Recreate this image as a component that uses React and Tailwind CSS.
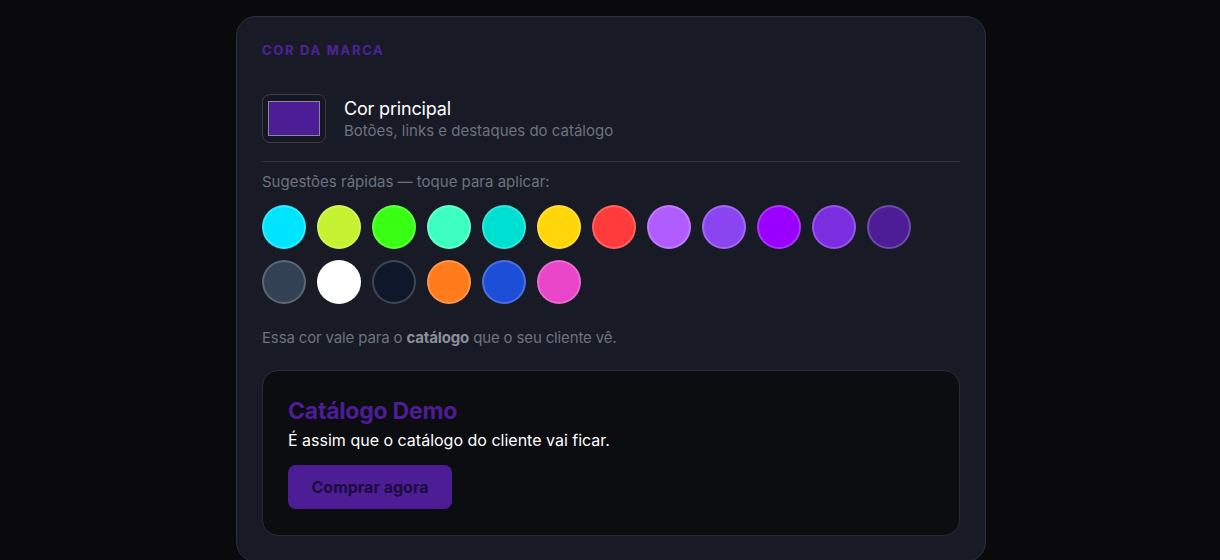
import React, { useState } from 'react';

const swatches = [
    '#00e5ff', '#c6f232', '#39ff14', '#3dffc0', '#00e0d2', '#ffd60a',
    '#ff3b3b', '#b15cff', '#8b45f0', '#9900ff', '#7b2ee0', '#4c1d95',
    '#334155', '#ffffff', '#0f172a', '#ff7b1c', '#1d4ed8', '#e845c8',
];

function App() {
    const [color, setColor] = useState('#4c1d95');

    return (
        <div
            className="min-h-screen bg-[#0a0a0d] flex justify-center pt-4 pb-4 pl-[2px]"
            style={{ fontFamily: 'Inter, "Noto Sans", sans-serif' }}
        >
            <div className="w-[750px] h-[546px] rounded-[20px] border border-[#2c303b] bg-[#181b25] px-[25px] pt-[25px]">
                {/* Section title */}
                <p className="text-[13px] font-bold tracking-[0.13em] text-[#4d2299] leading-4">
                    COR DA MARCA
                </p>

                <div className="flex items-center gap-[18px] mt-[36px]">
                    <div className="w-16 h-[49px] rounded-lg border border-[#383c48] bg-[#151821] flex items-center justify-center">
                        <div
                            className="w-[52px] h-[35px] border border-[#8b86a0]"
                            style={{ backgroundColor: color }}
                        />
                    </div>
                    <div>
                        <p className="text-[18px] text-white leading-6 tracking-[-0.01em]">
                            Cor principal
                        </p>
                        <p className="text-[15px] text-[#6b7280] leading-5">
                            Botões, links e destaques do catálogo
                        </p>
                    </div>
                </div>

                <div className="h-px bg-[#2e323d] mt-[18px]" />

                <p className="text-[15px] text-[#6b7280] mt-[10px] leading-5">
                    Sugestões rápidas — toque para aplicar:
                </p>

                <div className="grid grid-cols-[repeat(12,44px)] gap-[11px] mt-[13px]">
                    {swatches.map((c) => (
                        <button
                            key={c}
                            type="button"
                            onClick={() => setColor(c)}
                            className="w-11 h-11 rounded-full border-2 border-white/20"
                            style={{ backgroundColor: c }}
                        />
                    ))}
                </div>

                <p className="text-[15px] text-[#6b7280] mt-[24px] leading-5 tracking-[-0.01em]">
                    Essa cor vale para o{' '}
                    <span className="font-bold text-[#8a909c]">catálogo</span>{' '}
                    que o seu cliente vê.
                </p>

                {/* Preview */}
                <div className="mt-[22px] h-[166px] rounded-2xl border border-[#2a2d36] bg-[#0c0d11] px-[25px] pt-[26px]">
                    <p
                        className="text-[23px] font-bold leading-7 tracking-[-0.01em]"
                        style={{ color: color }}
                    >
                        Catálogo Demo
                    </p>
                    <p className="text-[16px] text-white mt-[3px] leading-6">
                        É assim que o catálogo do cliente vai ficar.
                    </p>
                    <button
                        type="button"
                        className="mt-[13px] w-[164px] h-[44px] rounded-lg text-[16px] font-bold text-[#1b0c3d]"
                        style={{ backgroundColor: color }}
                    >
                        Comprar agora
                    </button>
                </div>
            </div>
        </div>
    );
}

export default App;
